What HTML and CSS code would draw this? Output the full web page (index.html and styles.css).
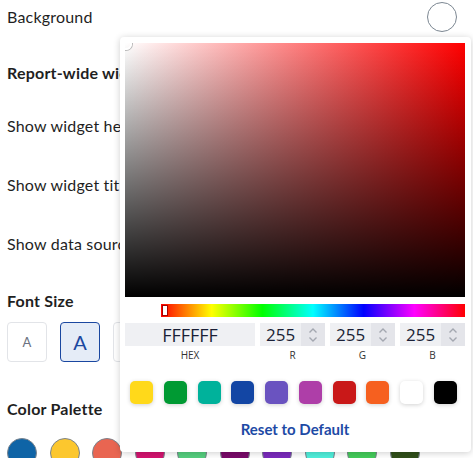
FILE: index.html
```html
<!DOCTYPE html>
<html lang="en">
<head>
    <meta charset="UTF-8">
    <meta name="viewport" content="width=device-width, initial-scale=1.0">
    <title>Report Settings</title>
    <link rel="stylesheet" href="styles.css">
</head>
<body>
    <div class="settings">
        <div class="row">
            <span>Background</span>
            <span class="bg-circle"></span>
        </div>
        <div class="row heading m22">Report-wide widget settings</div>
        <div class="row m19">Show widget header</div>
        <div class="row m25">Show widget title</div>
        <div class="row m25">Show data source</div>
        <div class="row heading m23">Font Size</div>

        <div class="font-sizes">
            <button class="size-btn small">A</button>
            <button class="size-btn medium active">A</button>
            <button class="size-btn large">A</button>
        </div>

        <div class="row heading m29">Color Palette</div>
        <div class="palette">
            <span class="dot" style="background:#0f64a6"></span>
            <span class="dot" style="background:#fcc72e"></span>
            <span class="dot" style="background:#e96551"></span>
            <span class="dot" style="background:#d4136f"></span>
            <span class="dot" style="background:#55cf7e"></span>
            <span class="dot" style="background:#7a0a6a"></span>
            <span class="dot" style="background:#7b2abd"></span>
            <span class="dot" style="background:#4ff0dc"></span>
            <span class="dot" style="background:#44cc5a"></span>
            <span class="dot" style="background:#31501a"></span>
        </div>
    </div>

    <!-- color picker popover -->
    <div class="picker">
        <div class="saturation">
            <span class="pointer"></span>
        </div>
        <div class="hue-row">
            <div class="hue">
                <span class="hue-handle"></span>
            </div>
        </div>
        <div class="fields">
            <div class="field">
                <div class="input hex">FFFFFF</div>
                <label>HEX</label>
            </div>
            <div class="field">
                <div class="input num"><span>255</span><span class="spin"><svg width="10" height="16" viewBox="0 0 10 16"><path d="M1.5 5.5 5 2l3.5 3.5M1.5 10.5 5 14l3.5-3.5" fill="none" stroke="#a3a7b0" stroke-width="1.4"/></svg></span></div>
                <label>R</label>
            </div>
            <div class="field">
                <div class="input num"><span>255</span><span class="spin"><svg width="10" height="16" viewBox="0 0 10 16"><path d="M1.5 5.5 5 2l3.5 3.5M1.5 10.5 5 14l3.5-3.5" fill="none" stroke="#a3a7b0" stroke-width="1.4"/></svg></span></div>
                <label>G</label>
            </div>
            <div class="field">
                <div class="input num"><span>255</span><span class="spin"><svg width="10" height="16" viewBox="0 0 10 16"><path d="M1.5 5.5 5 2l3.5 3.5M1.5 10.5 5 14l3.5-3.5" fill="none" stroke="#a3a7b0" stroke-width="1.4"/></svg></span></div>
                <label>B</label>
            </div>
        </div>
        <div class="presets">
            <span class="preset" style="background:#ffd91a"></span>
            <span class="preset" style="background:#009a33"></span>
            <span class="preset" style="background:#00b29b"></span>
            <span class="preset" style="background:#1346a4"></span>
            <span class="preset" style="background:#6a53c0"></span>
            <span class="preset" style="background:#ae3ea8"></span>
            <span class="preset" style="background:#c91818"></span>
            <span class="preset" style="background:#f6601f"></span>
            <span class="preset" style="background:#ffffff"></span>
            <span class="preset" style="background:#000000"></span>
        </div>
        <div class="reset">Reset to Default</div>
    </div>
</body>
</html>
```

FILE: styles.css
```css
body {
    margin: 0;
    font-family: Lato, "Open Sans", sans-serif;
    color: #1f1f1f;
    background: #fff;
    overflow: hidden;
}
.settings {
    padding: 0 16px 0 7px;
}
.row {
    height: 34px;
    display: flex;
    align-items: center;
    justify-content: space-between;
    font-size: 16px;
    letter-spacing: 0.2px;
    white-space: nowrap;
    margin-top: -1px;
}
.heading {
    font-weight: 700;
}
.m19 { margin-top: 19px; }
.m22 { margin-top: 22px; }
.m23 { margin-top: 23px; }
.m25 { margin-top: 25px; }
.m29 { margin-top: 29px; }
.bg-circle {
    width: 28px;
    height: 28px;
    border: 1px solid #7c8792;
    border-radius: 50%;
    background: #fff;
    margin-top: 1px;
}
.font-sizes {
    display: flex;
    gap: 13px;
    margin-top: 5px;
}
.size-btn {
    width: 40px;
    height: 40px;
    border: 1px solid #e2e4e8;
    border-radius: 4px;
    background: #fff;
    color: #6b7280;
    font-family: inherit;
    padding: 0;
}
.size-btn.small { font-size: 13px; }
.size-btn.medium { font-size: 20px; }
.size-btn.large { font-size: 26px; }
.size-btn.active {
    background: #e5ecf7;
    border-color: #1a47a0;
    color: #1a47a0;
}
.palette {
    display: flex;
    gap: 12.5px;
    margin-top: 13px;
}
.dot {
    width: 28px;
    height: 28px;
    flex: none;
    border: 1px solid #7b848e;
    border-radius: 50%;
}

/* picker */
.picker {
    position: absolute;
    left: 120px;
    top: 37px;
    width: 351px;
    height: 415px;
    box-sizing: border-box;
    padding: 6px 6px 0 5px;
    background: #fff;
    border-radius: 4px;
    box-shadow: 0 1px 7px rgba(0, 0, 0, 0.2);
}
.saturation {
    position: relative;
    height: 254px;
    overflow: hidden;
    background: linear-gradient(to top, #000, rgba(0, 0, 0, 0)),
                linear-gradient(to right, #fff, #f00);
}
.pointer {
    position: absolute;
    left: -5px;
    top: -5px;
    width: 8px;
    height: 8px;
    border: 2px solid #fff;
    border-radius: 50%;
    box-shadow: 0 0 0 1px #bbb;
}
.hue-row {
    margin-top: 7px;
    padding-left: 36px;
}
.hue {
    position: relative;
    height: 13px;
    background: linear-gradient(to right, #f00, #ff0, #0f0, #0ff, #00f, #f0f, #f00);
}
.hue-handle {
    position: absolute;
    left: 1px;
    top: 1px;
    width: 6px;
    height: 11px;
    background: #fff;
    border: 1px solid #a00;
    box-sizing: border-box;
}
.fields {
    display: grid;
    grid-template-columns: 130px 65px 65px 65px;
    gap: 5px;
    margin-top: 6px;
}
.field {
    display: flex;
    flex-direction: column;
    align-items: center;
}
.field label {
    font-family: "Open Sans", sans-serif;
    font-size: 10px;
    color: #333;
    margin-top: 2px;
}
.input {
    width: 100%;
    height: 23px;
    background: #eff0f3;
    color: #1a1f36;
    font-family: "Open Sans", sans-serif;
    font-size: 17px;
    display: flex;
    align-items: center;
    box-sizing: border-box;
}
.input.hex {
    justify-content: center;
    font-size: 18px;
}
.input.num {
    padding-left: 6px;
    justify-content: space-between;
}
.spin {
    width: 24px;
    height: 100%;
    background: #e4e5ea;
    display: flex;
    align-items: center;
    justify-content: center;
}
.presets {
    display: flex;
    justify-content: space-between;
    padding: 0 8px 0 5px;
    margin-top: 19px;
}
.preset {
    width: 23px;
    height: 23px;
    border-radius: 5px;
    box-shadow: 0 1px 4px rgba(0, 0, 0, 0.18);
}
.reset {
    margin-top: 16px;
    text-align: center;
    font-size: 15px;
    font-weight: 700;
    color: #1d4aa5;
}
```
